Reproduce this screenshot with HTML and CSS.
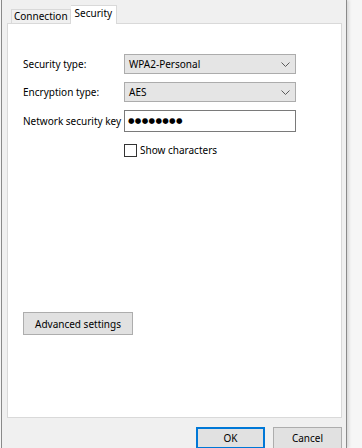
FILE: index.html
```html
<!DOCTYPE html>
<html lang="en">
<head>
  <meta charset="UTF-8" />
  <title>Wireless Network Properties</title>
  <link rel="stylesheet" href="styles.css">
</head>
<body>
  <div class="window">
    <div class="tabs">
      <div class="tab">Connection</div>
      <div class="tab active">Security</div>
    </div>

    <div class="panel">
      <div class="form">
        <label class="label">Security type:</label>
        <div class="select">
          <span>WPA2-Personal</span>
          <svg class="chevron" width="9" height="5" viewBox="0 0 9 5"><path d="M0.5 0.5 L4.5 4.5 L8.5 0.5" fill="none" stroke="#5a5a5a" stroke-width="1"/></svg>
        </div>

        <label class="label">Encryption type:</label>
        <div class="select">
          <span>AES</span>
          <svg class="chevron" width="9" height="5" viewBox="0 0 9 5"><path d="M0.5 0.5 L4.5 4.5 L8.5 0.5" fill="none" stroke="#5a5a5a" stroke-width="1"/></svg>
        </div>

        <label class="label">Network security key</label>
        <div class="textbox">&#9679;&#9679;&#9679;&#9679;&#9679;&#9679;&#9679;&#9679;</div>

        <span></span>
        <div class="check-row">
          <span class="checkbox"></span>
          <span>Show characters</span>
        </div>
      </div>

      <button class="btn advanced">Advanced settings</button>
    </div>

    <div class="footer">
      <button class="btn default">OK</button>
      <button class="btn">Cancel</button>
    </div>
  </div>
</body>
</html>
```

FILE: styles.css
```css
body {
  margin: 0;
  background: #f6f6f6;
  font-family: 'Noto Sans', 'Segoe UI', sans-serif;
  font-size: 10px;
  color: #000;
}

.window {
  width: 346px;
  height: 448px;
  background: #f0f0f0;
  border-left: 1px solid #8a8a8a;
  border-right: 1px solid #8a8a8a;
  margin-left: 1px;
  box-shadow: 2px 0 3px rgba(0,0,0,0.12);
  overflow: hidden;
  box-sizing: border-box;
}

.tabs {
  display: flex;
  align-items: flex-end;
  height: 23px;
  padding-left: 9px;
}

.tab {
  height: 13px;
  line-height: 13px;
  padding: 0 2px;
  border: 1px solid #d9d9d9;
  border-bottom: none;
  background: #f0f0f0;
  white-space: nowrap;
}

.tab.active {
  height: 18px;
  line-height: 15px;
  padding: 0 4px;
  background: #fff;
  position: relative;
  top: 1px;
  border-left: none;
}

.panel {
  margin-left: 5px;
  width: 335px;
  height: 395px;
  background: #fff;
  border: 1px solid #d9d9d9;
  box-sizing: border-box;
  padding: 30px 15px 0 15px;
  display: flex;
  flex-direction: column;
}

.form {
  display: grid;
  grid-template-columns: 101px 172px;
  row-gap: 8px;
  align-items: center;
}

.label {
  line-height: 14px;
  white-space: nowrap;
}

.select {
  height: 20px;
  background: #e5e5e5;
  border: 1px solid #acacac;
  box-sizing: border-box;
  display: flex;
  align-items: center;
  justify-content: space-between;
  padding: 0 5px 0 4px;
}

.textbox {
  height: 22px;
  border: 1px solid #7a7a7a;
  background: #fff;
  box-sizing: border-box;
  padding: 0 3px;
  line-height: 19px;
  font-family: 'DejaVu Sans', sans-serif;
  font-size: 7.5px;
  letter-spacing: 0.3px;
}

.check-row {
  display: flex;
  align-items: center;
  gap: 3px;
  margin-top: 3px;
}

.checkbox {
  width: 13px;
  height: 13px;
  border: 1px solid #333;
  box-sizing: border-box;
  background: #fff;
}

.btn {
  font-family: 'Noto Sans', 'Segoe UI', sans-serif;
  font-size: 10px;
  color: #000;
  background: #e1e1e1;
  border: 1px solid #adadad;
  height: 23px;
  padding: 0;
  box-sizing: border-box;
}

.advanced {
  width: 110px;
  margin-top: 155px;
}

.footer {
  display: flex;
  justify-content: flex-end;
  gap: 8px;
  padding: 9px 4px 0 0;
}

.footer .btn {
  width: 69px;
  height: 22px;
}

.footer .btn.default {
  border: 2px solid #0078d7;
}
```
